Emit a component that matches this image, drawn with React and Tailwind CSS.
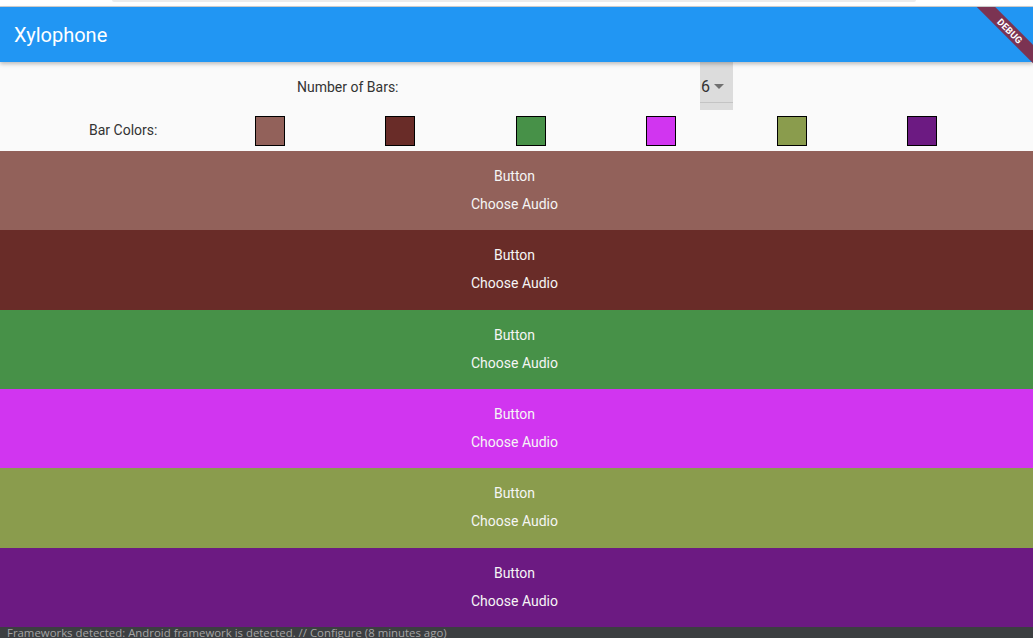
import React from 'react';

const BAR_COLORS = ['#92615a', '#692c28', '#479148', '#d135f0', '#8a9c4d', '#6c1a82'];

function DebugBanner() {
  return (
    <div className="pointer-events-none absolute right-0 top-0 h-[60px] w-[60px] overflow-hidden">
      <div className="absolute left-[36.5px] top-[23.5px] flex h-[13px] w-[90px] -translate-x-1/2 -translate-y-1/2 rotate-45 items-center justify-center bg-[#7b3352]">
        <span className="text-[9.5px] font-bold leading-none tracking-[0.2px] text-white">DEBUG</span>
      </div>
    </div>
  );
}

function BarColorsRow() {
  return (
    <div className="flex h-[41px] items-center pl-[89px]">
      <span className="w-[68px] whitespace-nowrap text-[14px] text-[#333]">Bar Colors:</span>
      <div className="ml-[98px] flex gap-[100.4px]">
        {BAR_COLORS.map((c) => (
          <div key={c} className="h-[30px] w-[30px] border border-black" style={{ backgroundColor: c }} />
        ))}
      </div>
    </div>
  );
}

export default function App() {
  return (
    <div className="relative flex h-[638px] w-[1033px] flex-col overflow-hidden bg-[#fafafa] font-['Roboto',sans-serif]">
      {/* host window strip */}
      <div className="relative h-[6px] shrink-0 bg-white">
        <div className="absolute left-[112px] top-0 h-[2px] w-[804px] rounded-b bg-[#ececec]" />
      </div>
      <div className="h-px shrink-0 bg-[#d0d0d0]" />

      <header className="relative z-10 flex h-[55px] shrink-0 items-center bg-[#2196f3] pl-[14px] shadow-[0_2px_4px_rgba(0,0,0,0.25)]">
        <h1 className="text-[20px] font-normal text-white">Xylophone</h1>
        <DebugBanner />
      </header>

      <div className="flex h-[48px] shrink-0 items-center pl-[297px]">
        <span className="w-[403px] pt-[2px] text-[14px] text-[#333]">Number of Bars:</span>
        <div className="relative flex h-[48px] w-[33px] items-center bg-[#dcdcdc]">
          <span className="ml-px pt-[2px] text-[16px] text-[#333]">6</span>
          <svg className="ml-[4px]" width="10" height="5" viewBox="0 0 10 5">
            <path d="M0 0h10L5 5z" fill="#707070" />
          </svg>
          <div className="absolute bottom-[7px] left-0 h-px w-full bg-[#c4c4c4]" />
        </div>
      </div>

      <BarColorsRow />

      <div className="flex h-[476px] shrink-0 flex-col">
        {BAR_COLORS.map((c) => (
          <div key={c} className="flex flex-1 flex-col items-center justify-center gap-[11px] pr-[4px]" style={{ backgroundColor: c }}>
            <span className="text-[14px] font-normal leading-[17px] text-[#f5f5f5]">Button</span>
            <span className="text-[14px] font-normal leading-[17px] text-[#f5f5f5]">Choose Audio</span>
          </div>
        ))}
      </div>

      <div className="h-[11px] shrink-0 overflow-hidden bg-[#3c3f41] pl-[7px]">
        <div className="-mt-[2px] whitespace-nowrap font-['Open_Sans',sans-serif] text-[11.4px] leading-[16px] text-[#a5a5a5]">
          Frameworks detected: Android framework is detected. // Configure (8 minutes ago)
        </div>
      </div>
    </div>
  );
}
